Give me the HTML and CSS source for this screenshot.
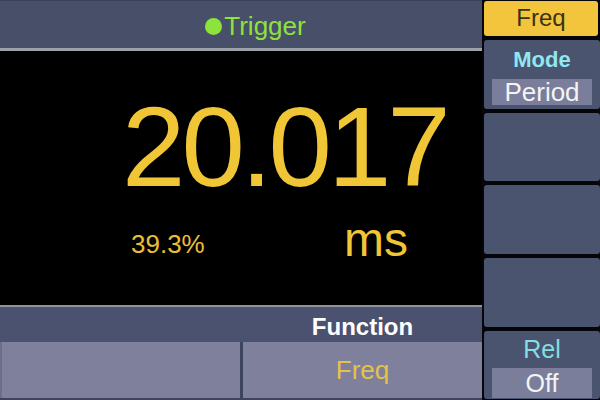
FILE: index.html
```html
<!DOCTYPE html>
<html>
<head>
<meta charset="utf-8">
<link rel="stylesheet" href="styles.css">
</head>
<body>
<div class="device">
  <div class="main">
    <div class="topbar"><span class="dot"></span><span class="trig">Trigger</span></div>
    <div class="rule"></div>
    <div class="screen">
      <div class="value">20.017</div>
      <div class="subrow">
        <span class="pct">39.3%</span>
        <span class="unit">ms</span>
      </div>
    </div>
    <div class="rule thin"></div>
    <div class="funcbar"><span></span><span class="functitle">Function</span></div>
    <div class="buttons">
      <div class="btn"></div>
      <div class="btn"><span class="btnval">Freq</span></div>
    </div>
  </div>
  <div class="side">
    <div class="freqbtn">Freq</div>
    <div class="panel">
      <div class="ptitle mode">Mode</div>
      <div class="pbox period">Period</div>
    </div>
    <div class="panel empty"></div>
    <div class="panel empty tall"></div>
    <div class="panel empty tall"></div>
    <div class="panel rel">
      <div class="ptitle reltitle">Rel</div>
      <div class="pbox off">Off</div>
    </div>
  </div>
</div>
</body>
</html>
```

FILE: styles.css
```css
* { box-sizing: border-box; margin: 0; padding: 0; }
html, body { width: 600px; height: 400px; overflow: hidden; background: #000; }
body { font-family: "Liberation Sans", Arial, sans-serif; }

.device {
  display: grid;
  grid-template-columns: 482px 116px;
  column-gap: 2px;
  width: 600px;
  height: 400px;
  background: #05060a;
}

.main { display: flex; flex-direction: column; height: 400px; }

.topbar {
  height: 48px;
  background: #474f69;
  border-top: 1px solid #3a4158;
  display: flex;
  align-items: center;
  justify-content: center;
  padding-left: 29px;
  padding-top: 3px;
  color: #8ee23e;
}
.dot {
  width: 17px; height: 17px;
  border-radius: 50%;
  background: #8ee23e;
  margin-right: 2px;
}
.trig { font-size: 26px; line-height: 30px; }

.rule { height: 3px; background: #9ea2a8; }
.rule.thin { height: 2px; background: #8f949c; }

.screen {
  height: 254px;
  background: #000;
  color: #f0c536;
  display: flex;
  flex-direction: column;
}
.value {
  font-size: 114px;
  line-height: 114px;
  letter-spacing: -4px;
  padding-left: 122px;
  margin-top: 39px;
}
.subrow {
  display: flex;
  align-items: flex-start;
  margin-top: 12px;
  padding-left: 131px;
}
.pct {
  width: 213px;
  font-size: 26px;
  line-height: 26px;
  margin-top: 15px;
  color: #e9bf38;
}
.unit { font-size: 48px; line-height: 48px; }

.funcbar {
  height: 35px;
  background: #4a5270;
  display: grid;
  grid-template-columns: 240px 239px;
  column-gap: 3px;
  padding-top: 5px;
}
.functitle {
  color: #fff;
  font-weight: bold;
  font-size: 24px;
  line-height: 30px;
  text-align: center;
}

.buttons {
  height: 58px;
  display: grid;
  grid-template-columns: 240px 239px;
  column-gap: 3px;
  background: #3c4460;
  padding-bottom: 2px;
}
.btn {
  background: #7e809c;
  display: flex;
  align-items: center;
  justify-content: center;
}
.btn:first-child { border-left: 2px solid #6c6f8a; }
.btnval { color: #e4c24a; font-size: 26px; line-height: 30px; padding-top: 0; }

.side {
  display: flex;
  flex-direction: column;
  gap: 4px;
  padding-top: 1px;
}
.freqbtn {
  height: 35px;
  margin-right: 2px;
  background: #f2c53c;
  border-radius: 3px;
  color: #3a3218;
  font-size: 24px;
  line-height: 34px;
  text-align: center;
}
.panel {
  height: 69px;
  background: #4b546f;
  border-radius: 3px;
  display: flex;
  flex-direction: column;
  align-items: center;
  padding-top: 9px;
}
.panel.empty { height: 68px; }
.panel.tall { height: 69px; }
.ptitle { text-align: center; }
.mode {
  color: #8fe7ef;
  font-weight: bold;
  font-size: 22px;
  line-height: 22px;
}
.pbox {
  width: 100px;
  background: #7a7e9a;
  color: #f4f4f4;
  text-align: center;
}
.period {
  margin-top: 8px;
  height: 26px;
  font-size: 26px;
  line-height: 26px;
}
.panel.rel { height: 68px; padding-top: 6px; }
.reltitle {
  color: #82dfe3;
  font-size: 25px;
  line-height: 25px;
}
.off {
  margin-top: 6px;
  height: 30px;
  font-size: 25px;
  line-height: 30px;
}
```
